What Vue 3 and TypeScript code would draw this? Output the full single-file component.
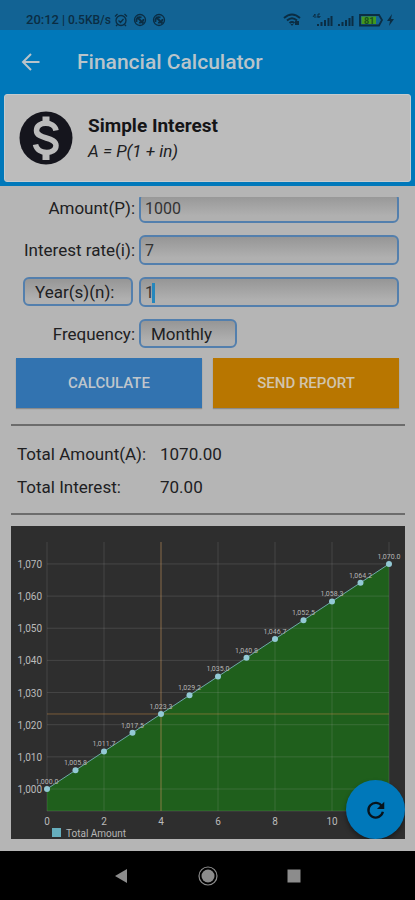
<script setup lang="ts">
import { ref, computed } from 'vue'

const amount = ref('1000')
const rate = ref('7')
const years = ref('1')
const frequency = ref('Monthly')

const interest = computed(() => (Number(amount.value) * Number(rate.value) * Number(years.value)) / 100)
const totalInterest = computed(() => interest.value.toFixed(2))
const totalAmount = computed(() => (Number(amount.value) + interest.value).toFixed(2))

interface Point {
  x: number
  y: number
  label: string
}

// Plot area inside the chart's view box
const left = 36
const right = 378
const top = 16
const bottom = 285
const toX = (month: number): number => left + month * 28.5
const toY = (value: number): number => 263 - (value - 1000) * 3.215

const format = (value: number, digits: number): string =>
  value.toLocaleString('en-US', { minimumFractionDigits: digits, maximumFractionDigits: digits })

const points: Point[] = Array.from({ length: 13 }, (_, i) => {
  const value = 1000 + (70 * i) / 12
  return { x: toX(i), y: toY(value), label: format(value, 1) }
})
const line = points.map((p) => `${p.x},${p.y}`).join(' ')
const area = `${left},${bottom} ${line} ${right},${bottom}`
const yTicks = [1000, 1010, 1020, 1030, 1040, 1050, 1060, 1070]
const xTicks = [0, 2, 4, 6, 8, 10]
const selected = points[4]
</script>

<template>
  <div class="screen">
    <header>
      <div class="status">
        <div class="status-group">
          <span class="clock">20:12</span>
          <span class="speed">| 0.5KB/s</span>
          <svg class="glyph" viewBox="0 0 14 14">
            <circle cx="7" cy="7.5" r="5" />
            <path d="M1 3.500 3.500 1M13 3.500 10.500 1M4.500 7.500l2 2 3-3.500M3.500 11.500l-1.500 1.500M10.500 11.500l1.500 1.500" />
          </svg>
          <svg v-for="n in 2" :key="n" class="glyph spaced" viewBox="0 0 14 14">
            <circle cx="7" cy="7" r="5.500" />
            <path d="M3.500 9V6.500a3.500 3.500 0 0 1 5-2M4 4l6.500 6.500M6 9.500a3.500 3.500 0 0 0 4.500-3.500M5.500 5.500 9 9" stroke-width="1.800" />
          </svg>
        </div>
        <svg class="signals" viewBox="0 0 112 16">
          <path class="arc" d="M1 6Q9-1 17 6M4 8.500Q9 4 14 8.500M6.500 11Q9 9 11.500 11" />
          <path d="M9 14 7.500 12h3zM12 9h4v4h-4z" />
          <path class="thin" d="M30 5l2-3v4M33.500 5h3M37 2h-2v3h2V4" />
          <path d="M34 14v-2h2v2zM37.500 14v-4h2v4zM41 14V8h2v6zM44.500 14V6h2v8zM47.500 14V4h2v10zM55 14v-2h2v2zM58.500 14v-4h2v4zM62 14V8h2v6zM65.500 14V6h2v8zM68.500 14V4h2v10z" />
          <path class="case" d="M77 3h19l3 5-3 5.500H77z" />
          <path class="charge" d="M78.500 4.500H93v7.500H78.500z" />
          <text x="81" y="12">81</text>
          <path d="m109 2-5 7h3l-1 5 5-7h-3z" />
        </svg>
      </div>
      <div class="appbar">
        <button class="back" type="button" aria-label="Back">
          <svg viewBox="0 0 20 20"><path d="M18.500 10H2.500M10 2 2 10l8 8" /></svg>
        </button>
        <h1>Financial Calculator</h1>
      </div>
      <div class="card">
        <svg class="coin" viewBox="0 0 54 54">
          <circle cx="27" cy="27" r="26.500" />
          <path d="M37 19.500C35.500 10 17.500 9.500 17.500 19.500c0 9.500 19.500 5.500 19.500 15 0 9.500-18.500 9.500-20.500-1" />
          <path class="bar" d="M27 5.500V13M27 41v8" />
        </svg>
        <div>
          <h2>Simple Interest</h2>
          <p>A = P(1 + in)</p>
        </div>
      </div>
    </header>

    <main>
      <div class="scroller">
        <form @submit.prevent>
          <label for="amount">Amount(P):</label>
          <input id="amount" v-model="amount" inputmode="decimal" />
          <label for="rate">Interest rate(i):</label>
          <input id="rate" v-model="rate" inputmode="decimal" />
          <button class="unit" type="button">Year(s)(n):</button>
          <div class="active">
            <input id="years" v-model="years" aria-label="Years" inputmode="decimal" />
            <span class="caret"></span>
          </div>
          <label for="frequency">Frequency:</label>
          <select id="frequency" v-model="frequency">
            <option>Monthly</option>
            <option>Yearly</option>
          </select>
        </form>

        <div class="actions">
          <button class="calculate" type="button">CALCULATE</button>
          <button class="report" type="button">SEND REPORT</button>
        </div>

        <dl>
          <dt>Total Amount(A):</dt>
          <dd>{{ totalAmount }}</dd>
          <dt>Total Interest:</dt>
          <dd>{{ totalInterest }}</dd>
        </dl>

        <div class="chart">
          <svg class="plot" viewBox="0 0 394 313">
            <polygon class="area" :points="area" />
            <g class="grid">
              <line v-for="t in yTicks" :key="t" :x1="left" :x2="right" :y1="toY(t)" :y2="toY(t)" />
              <line v-for="t in xTicks" :key="t" :x1="toX(t)" :x2="toX(t)" :y1="top" :y2="bottom" />
              <line :x1="right" :x2="right" :y1="top" :y2="bottom" />
              <line :x1="left" :x2="right" :y1="bottom" :y2="bottom" />
            </g>
            <g class="cross">
              <line :x1="selected.x" :x2="selected.x" :y1="top" :y2="bottom" />
              <line :x1="left" :x2="right" :y1="selected.y" :y2="selected.y" />
            </g>
            <polyline class="line" :points="line" />
            <g class="ticks">
              <text v-for="t in yTicks" :key="t" x="31" :y="toY(t) + 4" text-anchor="end">{{ format(t, 0) }}</text>
              <text v-for="t in xTicks" :key="t" :x="toX(t)" y="299" text-anchor="middle">{{ t }}</text>
            </g>
            <g v-for="p in points" :key="p.label">
              <circle class="dot" :cx="p.x" :cy="p.y" r="3" />
              <text class="value" :x="p.x" :y="p.y - 5" text-anchor="middle">{{ p.label }}</text>
            </g>
            <rect class="swatch" x="41" y="302" width="9" height="9" />
            <text class="legend" x="55" y="311">Total Amount</text>
          </svg>
          <button class="fab" type="button" aria-label="Reset">
            <svg viewBox="0 0 24 24">
              <path d="M18.500 8A8 8 0 1 0 19.500 14" />
              <path class="tip" d="M21 3v8h-8z" />
            </svg>
          </button>
        </div>
      </div>
    </main>

    <nav>
      <button type="button" aria-label="Back">
        <svg viewBox="0 0 20 20"><path d="M15 3v14L3 10z" /></svg>
      </button>
      <button type="button" aria-label="Home">
        <svg viewBox="0 0 20 20"><circle cx="10" cy="10" r="6.500" /><circle class="ring" cx="10" cy="10" r="9" /></svg>
      </button>
      <button type="button" aria-label="Recent apps">
        <svg viewBox="0 0 20 20"><path d="M3.500 3.500h13v13h-13z" /></svg>
      </button>
    </nav>
  </div>
</template>

<style>
body {
  margin: 0;
  background: #000;
}
</style>

<style scoped>
* {
  box-sizing: border-box;
}
.screen {
  display: flex;
  flex-direction: column;
  min-height: 100vh;
  background: #b5b5b5;
  color: #202022;
  font-family: Roboto, sans-serif;
  font-size: 17px;
}
button,
input,
select {
  margin: 0;
  padding: 0;
  border: 0;
  font: inherit;
  color: inherit;
}
header {
  background: #0078ba;
  padding-bottom: 4px;
}
.status {
  display: flex;
  align-items: center;
  justify-content: space-between;
  height: 30px;
  padding: 9px 20px 0 26px;
  background: #126394;
  color: #0b2d43;
}
.status-group {
  display: flex;
  align-items: center;
  gap: 3px;
}
.clock {
  font-size: 13px;
  font-weight: 500;
}
.speed {
  font-size: 12px;
  font-weight: 500;
}
.glyph {
  width: 14px;
  height: 14px;
  fill: none;
  stroke: #0b2d43;
  stroke-width: 1.3;
}
.spaced {
  margin-left: 2px;
}
.signals {
  width: 112px;
  height: 16px;
  fill: #0b2d43;
}
.arc {
  fill: none;
  stroke: #0b2d43;
  stroke-width: 2;
}
.thin {
  fill: none;
  stroke: #0b2d43;
  stroke-width: 1;
}
.case {
  fill: none;
  stroke: #0b2d43;
  stroke-width: 1.8;
}
.charge {
  fill: #43981f;
}
.signals text {
  font-size: 9px;
  font-weight: 700;
  fill: #175020;
}
.appbar {
  display: flex;
  align-items: center;
  gap: 36px;
  height: 64px;
  padding: 0 21px;
}
.back {
  width: 20px;
  height: 20px;
  background: none;
}
.back svg {
  display: block;
  fill: none;
  stroke: #b9c4ca;
  stroke-width: 2;
}
h1 {
  margin: 0;
  font-size: 21px;
  font-weight: 500;
  color: #b9c4ca;
}
.card {
  display: flex;
  align-items: center;
  gap: 15px;
  height: 88px;
  margin: 0 4px;
  padding: 0 14px;
  border: 1px solid #c5cbce;
  border-radius: 3px;
  background: #bcbcbc;
}
.coin {
  width: 54px;
  height: 54px;
  fill: #15151d;
}
.coin path {
  fill: none;
  stroke: #bcbcbc;
  stroke-width: 5.5;
}
.coin .bar {
  stroke-width: 7;
}
h2 {
  margin: 0;
  font-size: 19px;
  font-weight: 700;
  line-height: 26px;
  color: #151517;
}
.card p {
  margin: 0;
  font-size: 17px;
  font-style: italic;
  line-height: 24px;
}
main {
  flex: 1;
  padding: 11px 10px 12px 11px;
}
.scroller {
  overflow: hidden;
}
/* The form rests slightly scrolled under the heading card */
form {
  display: grid;
  grid-template-columns: 124px 1fr;
  column-gap: 4px;
  row-gap: 12px;
  margin-top: -4px;
  padding-right: 6px;
}
label {
  align-self: center;
  justify-self: end;
  line-height: 28px;
  white-space: nowrap;
}
input,
select,
.unit {
  border: 2px solid #537fad;
  border-radius: 6px;
  background: linear-gradient(#969696, #b0b0b0 80%);
}
input {
  display: block;
  width: 100%;
  height: 30px;
  padding: 0 4px;
  font-size: 16px;
  color: #333;
  outline: none;
}
.active {
  position: relative;
}
.caret {
  position: absolute;
  top: 6px;
  left: 13px;
  width: 3px;
  height: 20px;
  background: #2587bd;
}
.unit {
  height: 29px;
  margin-left: 12px;
  margin-right: 2px;
  padding: 0 10px;
  text-align: left;
}
select {
  justify-self: start;
  width: 98px;
  height: 29px;
  padding: 0 10px;
  appearance: none;
}
.actions {
  display: grid;
  grid-template-columns: 1fr 1fr;
  gap: 11px;
  padding: 10px 6px 16px 5px;
}
.actions button {
  height: 50px;
  font-size: 15px;
  font-weight: 500;
  color: #bfc6cc;
  box-shadow: 0 1px 1px #8b8b8b;
}
.actions .calculate {
  background: #3273b0;
}
.actions .report {
  background: #b87600;
  color: #d1c4ad;
}
dl {
  display: grid;
  grid-template-columns: 143px 1fr;
  row-gap: 9px;
  margin: 0;
  padding: 16px 6px 14px;
  border-top: 2px solid #6c6c6c;
  border-bottom: 2px solid #6c6c6c;
  line-height: 24px;
}
dd {
  margin: 0;
}
.chart {
  position: relative;
  margin-top: 11px;
}
.plot {
  display: block;
  width: 100%;
  background: #2e2e2e;
}
.area {
  fill: #1f5f1c;
}
.grid {
  stroke: #b4b4b4;
  stroke-opacity: 0.18;
}
.cross {
  stroke: #c58a45;
  stroke-opacity: 0.5;
}
.line {
  fill: none;
  stroke: #6da9a9;
  stroke-width: 1;
}
.ticks {
  font-size: 10px;
  fill: #bbb;
}
.value {
  font-size: 7px;
  fill: #b5b5b5;
}
.dot {
  fill: #93c9d5;
}
.swatch {
  fill: #66aebd;
}
.legend {
  font-size: 10px;
  fill: #b5b5b5;
}
.fab {
  position: absolute;
  right: 0;
  bottom: 0;
  display: grid;
  place-items: center;
  width: 59px;
  height: 59px;
  border-radius: 50%;
  background: #0078ba;
  box-shadow: 0 3px 5px #0006;
}
.fab svg {
  width: 22px;
  height: 22px;
  fill: none;
  stroke: #07131b;
  stroke-width: 2.5;
}
.fab .tip {
  fill: #07131b;
  stroke: none;
}
nav {
  display: flex;
  justify-content: center;
  align-items: center;
  gap: 66px;
  height: 49px;
  background: #000;
}
nav button {
  width: 20px;
  height: 20px;
  background: none;
}
nav svg {
  display: block;
  fill: #8c8c8c;
}
.ring {
  fill: none;
  stroke: #8c8c8c;
  stroke-width: 1.2;
}
</style>
